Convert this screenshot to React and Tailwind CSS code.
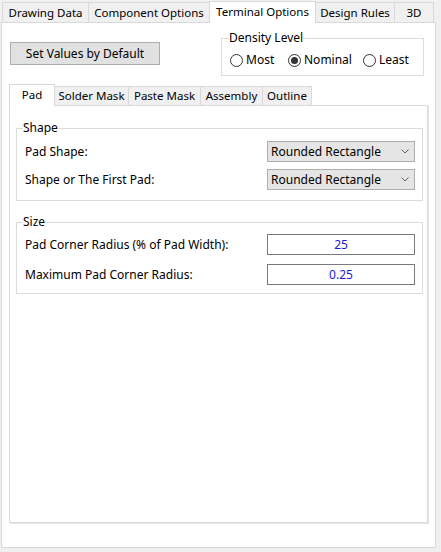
const topTabs = [
  { label: "Drawing Data", w: "w-[87px]" },
  { label: "Component Options", w: "w-[122px]" },
  { label: "Terminal Options", w: "w-[107px]", active: true },
  { label: "Design Rules", w: "w-[80px]" },
  { label: "3D", w: "w-[40px]" },
];

const padTabs = [
  { label: "Pad", w: "w-[46px]", active: true },
  { label: "Solder Mask", w: "w-[75px]" },
  { label: "Paste Mask", w: "w-[73px]" },
  { label: "Assembly", w: "w-[63px]" },
  { label: "Outline", w: "w-[50px]" },
];

export default function App() {
  return (
    <div className="h-[552px] w-[441px] overflow-hidden bg-[#f0f0f0] pl-[1px] font-['Noto_Sans',sans-serif] text-[12px] leading-[16px] text-black">
      <TabRow tabs={topTabs} rowH="h-[22px]" tabH="h-[20px]" activeH="h-[22px]" className="ml-[1px]" />

      <div className="h-[526px] w-[435px] border border-[#d9d9d9] bg-white">
        <div className="flex items-start">
          <button className="ml-[8px] mt-[19px] flex h-[23px] w-[150px] items-center justify-center border border-[#adadad] bg-[#e1e1e1]">
            Set Values by Default
          </button>

          <fieldset className="ml-[61px] mt-[7px] w-[203px] border border-[#dcdcdc] pb-[7px] pl-[8px] pt-[6px]">
            <legend className="-ml-px">Density Level</legend>
            <div className="flex h-[16px] items-center">
              <Radio label="Most" w="w-[58px]" />
              <Radio label="Nominal" w="w-[75px]" checked />
              <Radio label="Least" w="w-[50px]" />
            </div>
          </fieldset>
        </div>

        <TabRow tabs={padTabs} rowH="h-[21px]" tabH="h-[19px]" activeH="h-[22px]" className="ml-[7px] mt-[8px]" />

        <div className="ml-[7px] h-[418px] w-[419px] border border-[#dadada] bg-white shadow-[1px_1px_0_#e6e6e6]">
          <fieldset className="ml-[6px] mt-[14px] w-[407px] border border-[#dcdcdc] pb-[10px] pl-[8px] pr-[7px] pt-[5px]">
            <legend className="-ml-[2px]">Shape</legend>
            <div className="flex flex-col gap-[7px]">
              <Row label="Pad Shape:">
                <Select value="Rounded Rectangle" />
              </Row>
              <Row label="Shape or The First Pad:">
                <Select value="Rounded Rectangle" />
              </Row>
            </div>
          </fieldset>

          <fieldset className="ml-[6px] mt-[13px] w-[407px] border border-[#dcdcdc] pb-[8px] pl-[8px] pr-[7px] pt-[4px]">
            <legend className="-ml-[2px]">Size</legend>
            <div className="flex flex-col gap-[9px]">
              <Row label="Pad Corner Radius (% of Pad Width):">
                <Field value="25" />
              </Row>
              <Row label="Maximum Pad Corner Radius:">
                <Field value="0.25" />
              </Row>
            </div>
          </fieldset>
        </div>
      </div>
    </div>
  );
}

function TabRow({ tabs, rowH, tabH, activeH, className }) {
  return (
    <div className={`flex items-end text-[11.5px] ${rowH} ${className}`}>
      {tabs.map((tab, i) => (
        <div
          key={tab.label}
          className={`flex items-center justify-center border-x border-t border-[#d9d9d9] ${tab.w} ${
            i > 0 ? "-ml-px" : ""
          } ${tab.active ? `relative z-10 -mb-px bg-white pb-[2px] ${activeH}` : `bg-[#f0f0f0] ${tabH}`}`}
        >
          {tab.label}
        </div>
      ))}
    </div>
  );
}

function Radio({ label, w, checked = false }) {
  return (
    <div className={`flex items-center gap-[3px] ${w}`}>
      <span className="flex h-[13px] w-[13px] items-center justify-center rounded-full border border-[#333333] bg-white">
        {checked && <span className="h-[7px] w-[7px] rounded-full bg-[#333333]" />}
      </span>
      <span>{label}</span>
    </div>
  );
}

function Row({ label, children }) {
  return (
    <div className="flex h-[21px] items-center justify-between">
      <span>{label}</span>
      {children}
    </div>
  );
}

function Select({ value }) {
  return (
    <div className="flex h-[21px] w-[148px] items-center justify-between border border-[#adadad] bg-[#e5e5e5] pl-[3px] pr-[5px]">
      <span>{value}</span>
      <svg width="8" height="5" viewBox="0 0 8 5" fill="none">
        <path d="M0.5 0.5 L4 4 L7.5 0.5" stroke="#606060" strokeWidth="1" />
      </svg>
    </div>
  );
}

function Field({ value }) {
  return (
    <div className="flex h-[21px] w-[148px] items-center justify-center border border-[#7a7a7a] bg-white text-[#1a1ae0]">
      {value}
    </div>
  );
}
